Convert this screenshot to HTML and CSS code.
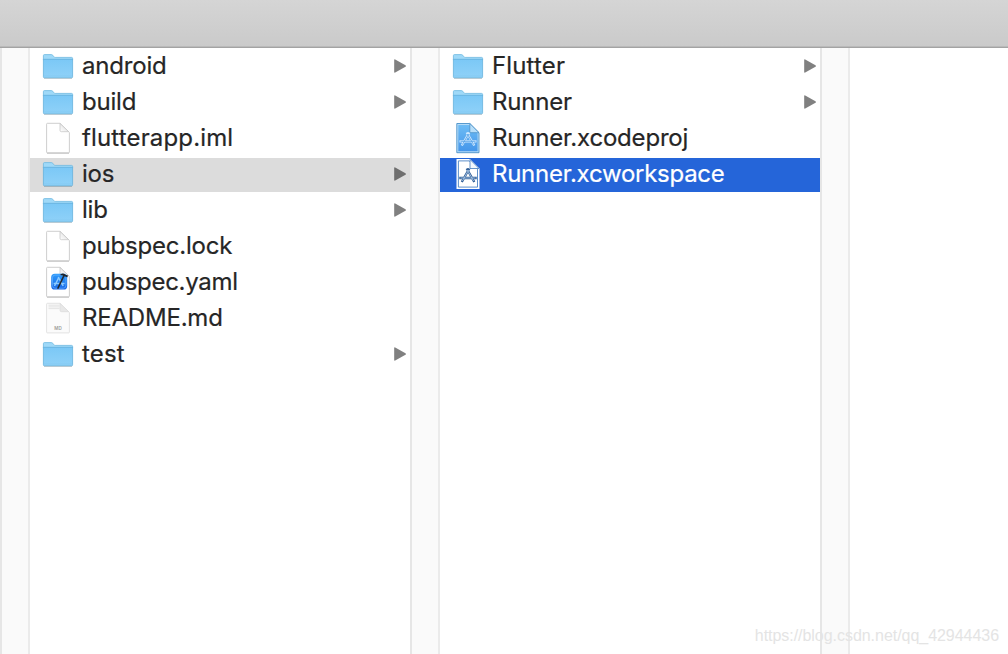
FILE: index.html
```html
<!DOCTYPE html>
<html lang="en">
<head>
    <meta charset="UTF-8">
    <meta name="viewport" content="width=device-width, initial-scale=1.0">
    <title>flutterapp</title>
    <link rel="stylesheet" href="styles.css">
</head>
<body>

    <!-- Shared icons -->
    <svg class="sprite" width="0" height="0">
        <defs>
            <linearGradient id="folderFill" x1="0" y1="0" x2="0" y2="1">
                <stop offset="0" stop-color="#7bc8f6"/>
                <stop offset="1" stop-color="#8fd1f8"/>
            </linearGradient>
            <linearGradient id="projectFill" x1="0" y1="0" x2="0" y2="1">
                <stop offset="0" stop-color="#6dbcf5"/>
                <stop offset="1" stop-color="#4596ea"/>
            </linearGradient>
            <linearGradient id="xcodeFill" x1="0" y1="0" x2="0" y2="1">
                <stop offset="0" stop-color="#2d9bfb"/>
                <stop offset="1" stop-color="#1765e6"/>
            </linearGradient>
            <linearGradient id="foldFill" x1="0" y1="1" x2="1" y2="0">
                <stop offset="0" stop-color="#fff"/>
                <stop offset="1" stop-color="#d8d8d8"/>
            </linearGradient>
        </defs>
        <symbol id="folder" viewBox="0 0 32 32">
            <path d="M2 28.3h28" stroke="#000" stroke-opacity=".22" stroke-width="1"/>
            <path d="M1.4 8V5.6q0-1 1-1h7q.8 0 1.3.6l1.3 1.7q.4.5 1.1.5h16.5q1 0 1 1V10H1.4z" fill="#9fd9f8" stroke="#6db7e0" stroke-width=".8"/>
            <path d="M1.4 9.3h29.2v17.5q0 1-1 1H2.4q-1 0-1-1z" fill="url(#folderFill)" stroke="#65b1dc" stroke-width=".8"/>
            <path d="M2 26h28" stroke="#7cc4ee" stroke-width=".5"/>
        </symbol>
        <symbol id="file" viewBox="0 0 32 32">
            <path d="M4.600 2.200q0-.9.9-.9H18l9.400 9.200v19.500q0 .9-.9.9h-21q-.9 0-.9-.9z" fill="#fff" stroke="#c8c8c8" stroke-width=".9"/>
            <path d="M5 31.200h22" stroke="#a9a9a9" stroke-width=".6"/>
            <path d="M18 1.500v6.800q0 1.400 1.400 1.400h7.300z" fill="url(#foldFill)" stroke="#c8c8c8" stroke-width=".8"/>
        </symbol>
        <symbol id="yaml" viewBox="0 0 32 32">
            <use href="#file"/>
            <rect x="9.200" y="7.800" width="16" height="15.700" rx="3.600" fill="url(#xcodeFill)"/>
            <rect x="10.500" y="9.100" width="13.400" height="13.100" rx="2.600" fill="none" stroke="#72baff" stroke-width=".6"/>
            <path d="M12.500 20l4.500-9M16.200 11l5 9M11.600 17.500h11" fill="none" stroke="#8ccaff" stroke-width="1.500"/>
            <path d="M22 9.500L16 22" stroke="#252a31" stroke-width="1.700" stroke-linecap="round"/>
            <path d="M18.500 8.200q2.800-1.400 5 .6l2.500.8-.6 1.700-3-1q-1.600-1.300-3.900-1z" fill="#20242a"/>
        </symbol>
        <symbol id="project" viewBox="0 0 32 32">
            <path d="M4.800 1.500h13l9.200 9.200v20H4.800z" fill="#b5dcf8" stroke="#4a91c8" stroke-width=".9"/>
            <path d="M6.300 3h10.900l8.400 8.400v17.900H6.300z" fill="url(#projectFill)"/>
            <path d="M17.800 1.500v9.200H27z" fill="#b9dff9" stroke="#4a91c8" stroke-width=".8"/>
            <path d="M17.300 10.500L9.800 23.500M14.700 10.500l7.600 13M7.500 19.300h17" fill="none" stroke="#cfe8ff" stroke-width="2.300"/>
            <path d="M16.600 12l-6.200 10.600M15.400 12l6.200 10.600M8.500 19.300h15" fill="none" stroke="#4d9ce5" stroke-width=".8"/>
        </symbol>
        <symbol id="workspace" viewBox="0 0 32 32">
            <path d="M4.500 1h13.500l9.500 9.500v20.500h-23z" fill="#fff"/>
            <path d="M6.400 2.900h10.900l8.200 8.200v18H6.400z" fill="#fff" stroke="#4c83c4" stroke-width=".9"/>
            <path d="M18 1.500v9h9z" fill="#f3f8fd" stroke="#417abb" stroke-width=".8"/>
            <path d="M17.300 10.500L9.800 24M14.700 10.500l7.600 13.500M7.300 20h17.400" fill="none" stroke="#315f98" stroke-width="2.300"/>
            <path d="M16.600 12l-6.200 11M15.400 12l6.200 11M8.500 20h15" fill="none" stroke="#b9d3ef" stroke-width=".8"/>
        </symbol>
        <symbol id="arrow" viewBox="0 0 12 14">
            <path d="M.2 1Q.2-.1 1.200.4L11.500 6.200q.8.8 0 1.600L1.200 13.600Q.2 14.100.2 13z" fill="currentColor"/>
        </symbol>
    </svg>

    <div class="toolbar"></div>

    <div class="browser">
        <div class="gutter"></div>
        <ul class="column">
            <li class="item"><svg class="icon"><use href="#folder"/></svg><span class="name">android</span><svg class="arrow"><use href="#arrow"/></svg></li>
            <li class="item"><svg class="icon"><use href="#folder"/></svg><span class="name">build</span><svg class="arrow"><use href="#arrow"/></svg></li>
            <li class="item"><svg class="icon"><use href="#file"/></svg><span class="name wide">flutterapp.iml</span></li>
            <li class="item open"><svg class="icon"><use href="#folder"/></svg><span class="name">ios</span><svg class="arrow"><use href="#arrow"/></svg></li>
            <li class="item"><svg class="icon"><use href="#folder"/></svg><span class="name">lib</span><svg class="arrow"><use href="#arrow"/></svg></li>
            <li class="item"><svg class="icon"><use href="#file"/></svg><span class="name">pubspec.lock</span></li>
            <li class="item"><svg class="icon"><use href="#yaml"/></svg><span class="name tight">pubspec.yaml</span></li>
            <li class="item">
                <svg class="icon" viewBox="0 0 32 32">
                    <path d="M4.600 2.200q0-.9.9-.9H18l9.400 9.200v19.500q0 .9-.9.9h-21q-.9 0-.9-.9z" fill="#fbfbfb" stroke="#dcdcdc" stroke-width=".8"/>
                    <path d="M6.500 3.200h11M6.500 4.900h11M6.500 6.600h11" stroke="#e0e0e0" stroke-width=".9"/>
                    <path d="M18 1.500v6.800q0 1.400 1.400 1.400h7.300z" fill="#e8e8e8" stroke="#d8d8d8" stroke-width=".6"/>
                    <text x="16" y="28.200" class="icon-label">MD</text>
                </svg>
                <span class="name">README.md</span>
            </li>
            <li class="item"><svg class="icon"><use href="#folder"/></svg><span class="name wide">test</span><svg class="arrow"><use href="#arrow"/></svg></li>
        </ul>
        <div class="gutter"></div>
        <ul class="column">
            <li class="item"><svg class="icon"><use href="#folder"/></svg><span class="name wide">Flutter</span><svg class="arrow"><use href="#arrow"/></svg></li>
            <li class="item"><svg class="icon"><use href="#folder"/></svg><span class="name">Runner</span><svg class="arrow"><use href="#arrow"/></svg></li>
            <li class="item"><svg class="icon"><use href="#project"/></svg><span class="name">Runner.xcodeproj</span></li>
            <li class="item selected"><svg class="icon"><use href="#workspace"/></svg><span class="name">Runner.xcworkspace</span></li>
        </ul>
        <div class="gutter"></div>
    </div>

    <div class="watermark">https://blog.csdn.net/qq_42944436</div>

</body>
</html>
```
FILE: styles.css
```css
* {
    box-sizing: border-box;
}
body {
    margin: 0;
    height: 654px;
    display: flex;
    flex-direction: column;
    overflow: hidden;
    background: #fff;
    color: #262626;
    font-family: Inter, "Liberation Sans", sans-serif;
}
.sprite {
    position: absolute;
}
.toolbar {
    height: 48px;
    flex: none;
    background: linear-gradient(#d5d5d5, #cacaca);
    border-bottom: 1px solid #a3a3a3;
    box-shadow: inset 0 -1px #b9b9b9;
}
.browser {
    flex: 1;
    display: flex;
}
.gutter {
    width: 30px;
    background: #fafafa;
    border-left: 2px solid #e6e6e6;
    border-right: 2px solid #ebebeb;
}
.column {
    width: 380px;
    margin: 0;
    padding: 2px 0 0;
    list-style: none;
}
.item {
    display: flex;
    align-items: center;
    height: 34px;
    margin-bottom: 2px;
    padding: 0 4px 0 12px;
}
.icon {
    width: 32px;
    height: 32px;
    margin-bottom: 2px;
}
.name {
    flex: 1;
    margin: 0 0 2px 8px;
    font-size: 24px;
    line-height: 32px;
    letter-spacing: -0.2px;
    white-space: nowrap;
    -webkit-text-stroke: 0.2px;
}
.wide {
    letter-spacing: 0.15px;
}
.tight {
    letter-spacing: -0.3px;
}
.arrow {
    width: 12px;
    height: 14px;
    margin-bottom: 2px;
    color: #808080;
}
.open {
    background: #dcdcdc;
}
.open .arrow {
    color: #6e6e6e;
}
.selected {
    background: #2565d9;
    color: #fff;
}
.selected .name {
    letter-spacing: -0.26px;
}
.icon-label {
    font-size: 4.5px;
    font-weight: 600;
    text-anchor: middle;
    fill: #999;
}
.watermark {
    position: absolute;
    right: 9px;
    bottom: 8px;
    font: 16px/20px "Liberation Sans", sans-serif;
    letter-spacing: -0.04px;
    color: #e4e4e4;
}
```
